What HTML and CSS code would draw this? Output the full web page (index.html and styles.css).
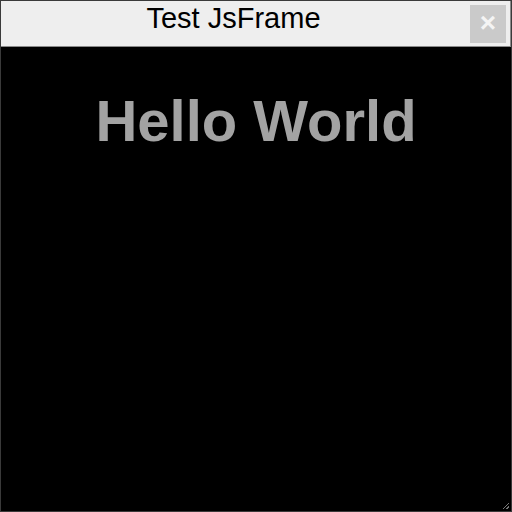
FILE: index.html
```html
<!DOCTYPE html>
<html>
<head>
<meta charset="utf-8">
<link rel="stylesheet" href="styles.css">
</head>
<body>
<div class="frame">
  <div class="titlebar">
    <div class="title">Test JsFrame</div>
    <div class="close">×</div>
  </div>
  <div class="content">
    <h1 class="hello">Hello World</h1>
    <div class="grip"></div>
  </div>
</div>
</body>
</html>
```
FILE: styles.css
```css
html, body {
  margin: 0;
  padding: 0;
  background: #000;
}
.frame {
  width: 512px;
  height: 512px;
  box-sizing: border-box;
  border: 1px solid #3a3a3a;
  display: flex;
  flex-direction: column;
  font-family: "Liberation Sans", Arial, sans-serif;
}
.titlebar {
  height: 45px;
  flex: none;
  background: #eeeeee;
  border-bottom: 1px solid #8a8a8a;
  border-right: 1px solid #8a8a8a;
  position: relative;
  display: flex;
  align-items: center;
  justify-content: center;
}
.title {
  font-size: 29px;
  color: #000;
  margin-left: -44px;
  margin-top: -11px;
}
.close {
  position: absolute;
  right: 4px;
  top: 4px;
  width: 36px;
  height: 38px;
  background: #cacaca;
  color: #f4f4f4;
  font-size: 28px;
  font-weight: bold;
  line-height: 36px;
  text-align: center;
}
.content {
  flex: 1;
  background: #000;
  position: relative;
  display: flex;
  flex-direction: column;
  align-items: center;
}
.hello {
  margin: 45px 0 0 0;
  font-size: 58px;
  font-weight: bold;
  color: #a3a3a3;
  line-height: 1;
}
.grip {
  position: absolute;
  right: 2px;
  bottom: 2px;
  width: 6px;
  height: 6px;
  background: linear-gradient(135deg, transparent 45%, #777 45%, #777 58%, transparent 58%, transparent 75%, #777 75%, #777 88%, transparent 88%);
}
```
